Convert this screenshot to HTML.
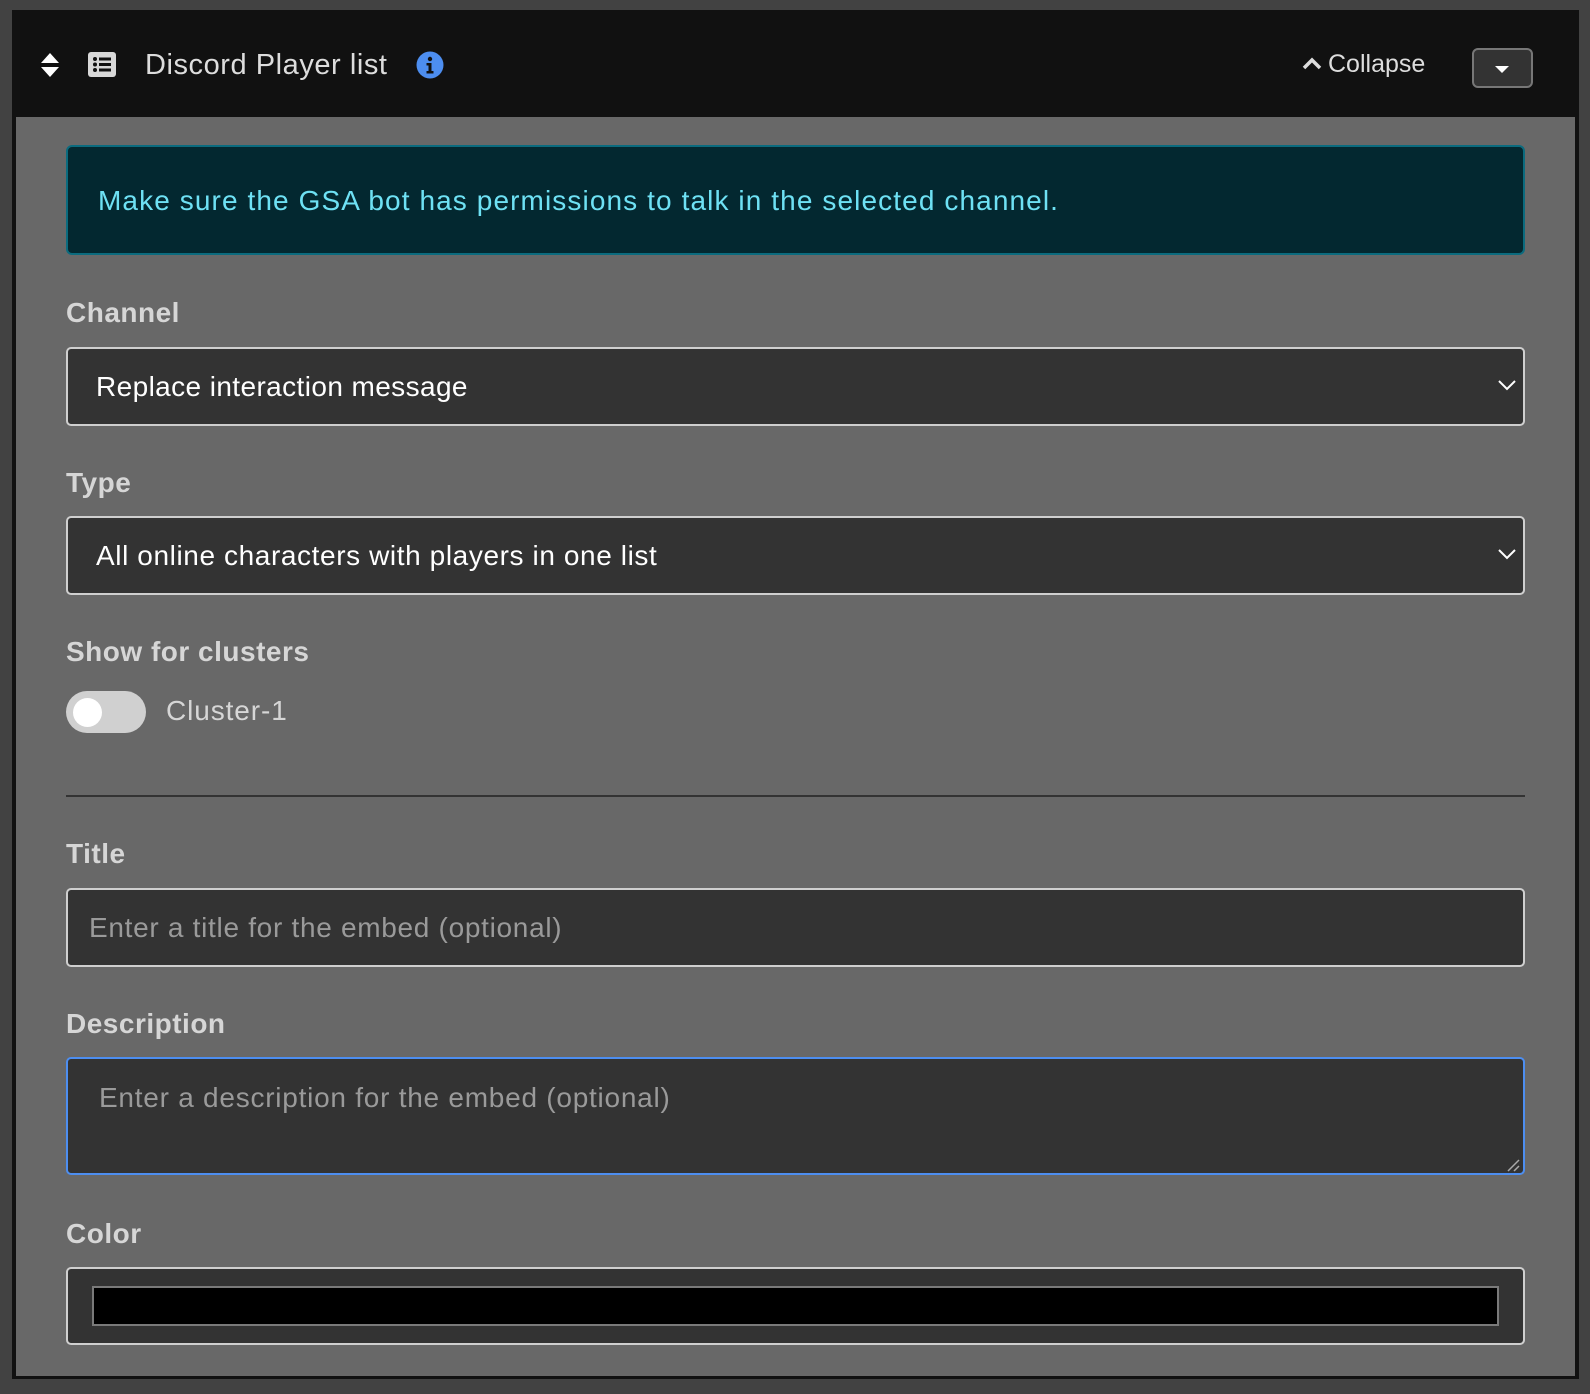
<!DOCTYPE html>
<html><head><meta charset="utf-8"><style>
*{box-sizing:border-box;margin:0;padding:0}
body{width:1590px;height:1394px;background:#424242;position:relative;overflow:hidden;font-family:"Liberation Sans",sans-serif}
.abs{position:absolute}
.frame{left:12px;top:10px;width:1567px;height:1369px;background:#111}
.gray{left:16px;top:117px;width:1559px;height:1259px;background:#686868}
.lbl{position:absolute;left:66px;font-weight:bold;font-size:28px;color:#d6d6d6;line-height:32px;letter-spacing:0.5px}
.inp{position:absolute;left:66px;width:1459px;background:#333;border:2px solid #cfcfcf;border-radius:5px;font-size:28px;line-height:32px}
</style></head><body>
<div class="abs frame"></div>
<div class="abs gray"></div>
<!-- header -->
<svg class="abs" style="left:40px;top:52px" width="20" height="26" viewBox="0 0 20 26"><path d="M10 1L19 11H1Z M10 25L19 15H1Z" fill="#fff"/></svg>
<svg class="abs" style="left:88px;top:52px" width="28" height="25" viewBox="0 0 28 25"><rect x="0" y="0" width="28" height="25" rx="3" fill="#d8d8d8"/><g fill="#111"><circle cx="7" cy="7" r="2"/><circle cx="7" cy="12.5" r="2"/><circle cx="7" cy="18" r="2"/><rect x="11" y="5.5" width="12" height="3"/><rect x="11" y="11" width="12" height="3"/><rect x="11" y="16.5" width="12" height="3"/></g></svg>
<div class="abs" style="left:145px;top:48px;font-size:29px;color:#ddd;line-height:34px;letter-spacing:0.55px">Discord Player list</div>
<svg class="abs" style="left:416px;top:51px" width="28" height="28" viewBox="0 0 28 28"><circle cx="14" cy="14" r="13.5" fill="#4d8ef0"/><circle cx="14" cy="8" r="2.2" fill="#111"/><path d="M10.5 12h5v8h2v2.5h-7V20h2v-5.5h-2z" fill="#111"/></svg>
<svg class="abs" style="left:1301px;top:55px" width="22" height="16" viewBox="0 0 22 16"><path d="M3 13L11 5L19 13" stroke="#ddd" stroke-width="3.5" fill="none"/></svg>
<div class="abs" style="left:1328px;top:48px;font-size:25px;color:#ddd;line-height:32px">Collapse</div>
<div class="abs" style="left:1472px;top:48px;width:61px;height:40px;border:2px solid #777;border-radius:6px;background:#333"></div>
<svg class="abs" style="left:1494px;top:65px" width="16" height="9" viewBox="0 0 16 9"><path d="M1 1H15L8 8Z" fill="#fff"/></svg>
<!-- alert -->
<div class="abs" style="left:66px;top:145px;width:1459px;height:110px;background:#032830;border:2px solid #0b6b7e;border-radius:6px"></div>
<div class="abs" style="left:98px;top:185px;font-size:28px;color:#6ee1f4;line-height:32px;letter-spacing:1.1px">Make sure the GSA bot has permissions to talk in the selected channel.</div>
<div class="lbl" style="top:297px">Channel</div>
<div class="inp" style="top:347px;height:79px;color:#fff;padding:22px 0 0 28px;letter-spacing:0.4px">Replace interaction message</div>
<svg class="abs" style="left:1498px;top:380px" width="18" height="11" viewBox="0 0 18 11"><path d="M1 1L9 9L17 1" stroke="#fff" stroke-width="2" fill="none"/></svg>
<div class="lbl" style="top:467px">Type</div>
<div class="inp" style="top:516px;height:79px;color:#fff;padding:22px 0 0 28px;letter-spacing:0.6px">All online characters with players in one list</div>
<svg class="abs" style="left:1498px;top:549px" width="18" height="11" viewBox="0 0 18 11"><path d="M1 1L9 9L17 1" stroke="#fff" stroke-width="2" fill="none"/></svg>
<div class="lbl" style="top:636px">Show for clusters</div>
<div class="abs" style="left:66px;top:691px;width:80px;height:42px;border-radius:21px;background:#d0d0d0"></div>
<div class="abs" style="left:73px;top:698px;width:29px;height:29px;border-radius:50%;background:#fff"></div>
<div class="abs" style="left:166px;top:695px;font-size:28px;color:#d6d6d6;line-height:32px;letter-spacing:0.9px">Cluster-1</div>
<div class="abs" style="left:66px;top:795px;width:1459px;height:2px;background:#333"></div>
<div class="lbl" style="top:838px">Title</div>
<div class="inp" style="top:888px;height:79px;color:#9a9a9a;padding:22px 0 0 21px;letter-spacing:0.7px">Enter a title for the embed (optional)</div>
<div class="lbl" style="top:1008px">Description</div>
<div class="inp" style="top:1057px;height:118px;border-color:#4d8ef0;color:#9a9a9a;padding:23px 0 0 31px;letter-spacing:0.75px">Enter a description for the embed (optional)</div>
<svg class="abs" style="left:1506px;top:1158px" width="14" height="14" viewBox="0 0 14 14"><path d="M2 13L13 2M8 13L13 8" stroke="#aaa" stroke-width="1.5"/></svg>
<div class="lbl" style="top:1218px">Color</div>
<div class="inp" style="top:1267px;height:78px"></div>
<div class="abs" style="left:92px;top:1286px;width:1407px;height:40px;background:#000;border:2px solid #7a7a7a"></div>
</body></html>
